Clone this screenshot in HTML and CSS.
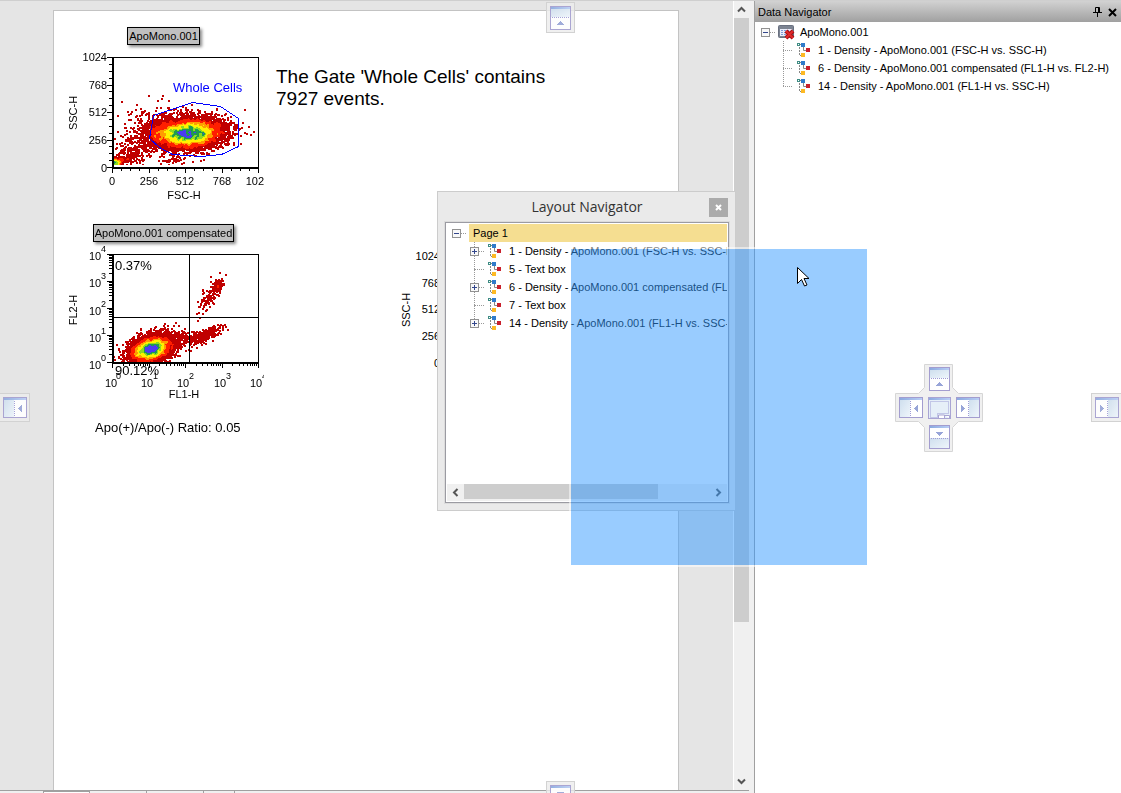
FILE: index.html
```
<!DOCTYPE html>
<html lang="en">
<head>
    <meta charset="UTF-8">
    <meta name="viewport" content="width=device-width, initial-scale=1.0">
    <title>Layout</title>
    <link rel="stylesheet" href="styles.css">
</head>
<body>
    <svg class="symbols" aria-hidden="true">
        <defs>
            <linearGradient id="bar" x1="0" x2="1" y1="0" y2="0">
                <stop offset="0" stop-color="#8ba9e0" />
                <stop offset="1" stop-color="#b9cef5" />
            </linearGradient>
            <linearGradient id="pane" x1="0" x2="1" y1="0" y2="1">
                <stop offset="0" stop-color="#cfdfee" />
                <stop offset="1" stop-color="#eef5fb" />
            </linearGradient>
        </defs>
        <symbol id="node" viewBox="0 0 14 14">
            <path d="M2.5 4v9M3 12.5h2" stroke="#888" stroke-dasharray="2 1" fill="none" />
            <path d="M3 1.5h2M6.5 4v3.500h3" stroke="#888" fill="none" />
            <rect x="0.500" y="0.500" width="2" height="2" fill="#fff" stroke="#3f8c84" />
            <rect x="4" y="0" width="4" height="4" fill="#2f7bcb" />
            <rect x="9" y="5" width="4" height="4" fill="#c9202c" />
            <rect x="4" y="10" width="4" height="4" fill="#fdb924" />
        </symbol>
        <symbol id="minus" viewBox="0 0 9 9">
            <rect x="0.500" y="0.500" width="8" height="8" fill="#f8f8f8" stroke="#919191" />
            <path d="M2 4.500h5" stroke="#33478c" />
        </symbol>
        <symbol id="plus" viewBox="0 0 9 9">
            <rect x="0.500" y="0.500" width="8" height="8" fill="#f8f8f8" stroke="#919191" />
            <path d="M2 4.500h5M4.500 2v5" stroke="#33478c" />
        </symbol>
        <symbol id="dock-up" viewBox="0 0 21 24">
            <rect x="0.500" y="0.500" width="20" height="23" fill="#fff" stroke="#a39dcf" />
            <rect x="1" y="3" width="19" height="8" fill="url(#pane)" />
            <rect x="1" y="1" width="19" height="2" fill="url(#bar)" />
            <path d="M2 11.500h17" stroke="#9f9cd6" stroke-dasharray="1 1" />
            <path d="M7 19h7v-1h-1v-1h-1v-1h-1v-1h-1v1h-1v1h-1v1h-1z" fill="#98a5d8" />
        </symbol>
        <symbol id="dock-down" viewBox="0 0 21 24">
            <rect x="0.500" y="0.500" width="20" height="23" fill="#fff" stroke="#a39dcf" />
            <rect x="1" y="13" width="19" height="10" fill="url(#pane)" />
            <rect x="1" y="1" width="19" height="2" fill="url(#bar)" />
            <path d="M2 13.500h17" stroke="#9f9cd6" stroke-dasharray="1 1" />
            <path d="M7 7h7v1h-1v1h-1v1h-1v1h-1v-1h-1v-1h-1v-1h-1z" fill="#98a5d8" />
        </symbol>
        <symbol id="dock-left" viewBox="0 0 24 21">
            <rect x="0.500" y="0.500" width="23" height="20" fill="#fff" stroke="#a39dcf" />
            <rect x="1" y="3" width="10" height="17" fill="url(#pane)" />
            <rect x="1" y="1" width="22" height="2" fill="url(#bar)" />
            <path d="M11.500 4v16" stroke="#9f9cd6" stroke-dasharray="1 1" />
            <path d="M19 8v7h-1v-1h-1v-1h-1v-1h-1v-1h1v-1h1v-1h1v-1z" fill="#98a5d8" />
        </symbol>
        <symbol id="dock-right" viewBox="0 0 24 21">
            <rect x="0.500" y="0.500" width="23" height="20" fill="#fff" stroke="#a39dcf" />
            <rect x="13" y="3" width="10" height="17" fill="url(#pane)" />
            <rect x="1" y="1" width="22" height="2" fill="url(#bar)" />
            <path d="M12.500 4v16" stroke="#9f9cd6" stroke-dasharray="1 1" />
            <path d="M5 8v7h1v-1h1v-1h1v-1h1v-1h-1v-1h-1v-1h-1v-1z" fill="#98a5d8" />
        </symbol>
        <symbol id="dock-fill" viewBox="0 0 23 22">
            <rect x="0.500" y="0.500" width="22" height="21" fill="#e6eff8" stroke="#a9a4d3" />
            <rect x="1" y="1" width="21" height="2" fill="url(#bar)" />
            <path d="M2.500 4.500h18v12h-11v4h-7z" fill="none" stroke="#9f9cd6" stroke-dasharray="1 1" />
            <path d="M10.500 21v-3h6v3M16.500 18.500h5v2.500" fill="#fff" stroke="#a9a4d3" />
        </symbol>
    </svg>

    <div class="app">
        <main class="workspace">
            <div class="view">
                <div class="page">
                    <figure class="plot plot-1">
                        <figcaption class="plot-title">ApoMono.001</figcaption>
                        <div class="chart">
                            <canvas class="density" data-plot="cells" width="145" height="110"></canvas>
                            <svg class="axes" data-scale="linear" viewBox="63 45 201 160" width="201" height="160">
                                <path class="ticks" />
                                <path class="frame" d="M112.500 57.500h146v110h-146z" />
                                <path class="axis" d="M113 57v111h146" />
                                <path class="gate" d="M192.500 102.500l28 4 18 12v28l-17 8-20 2-29-2-13-7-10-9 4-23z" />
                                <text class="gate-name" x="173" y="92">Whole Cells</text>
                                <g class="end">
                                    <text x="107" y="61">1024</text>
                                    <text x="107" y="89">768</text>
                                    <text x="107" y="116">512</text>
                                    <text x="107" y="144">256</text>
                                    <text x="107" y="172">0</text>
                                </g>
                                <g class="middle">
                                    <text x="112" y="185">0</text>
                                    <text x="149" y="185">256</text>
                                    <text x="185" y="185">512</text>
                                    <text x="222" y="185">768</text>
                                    <text x="258" y="185">1024</text>
                                    <text x="184" y="199">FSC-H</text>
                                    <text transform="translate(77 113) rotate(-90)">SSC-H</text>
                                </g>
                            </svg>
                        </div>
                    </figure>

                    <figure class="plot plot-2">
                        <figcaption class="plot-title">ApoMono.001 compensated</figcaption>
                        <div class="chart">
                            <canvas class="density" data-plot="compensated" width="145" height="110"></canvas>
                            <svg class="axes" data-scale="log" viewBox="63 242 201 165" width="201" height="165">
                                <path class="ticks" />
                                <path class="frame" d="M112.500 254.500h146v108h-146zM189.500 254v109M112 317.500h147" />
                                <path class="axis" d="M113 254v109h146" />
                                <text class="percent" x="115" y="270">0.37%</text>
                                <text class="percent" x="115" y="375">90.12%</text>
                                <g>
                                    <text x="89" y="260">10</text><text class="power" x="101" y="252">4</text>
                                    <text x="89" y="287">10</text><text class="power" x="101" y="279">3</text>
                                    <text x="89" y="315">10</text><text class="power" x="101" y="307">2</text>
                                    <text x="89" y="342">10</text><text class="power" x="101" y="334">1</text>
                                    <text x="89" y="369">10</text><text class="power" x="101" y="361">0</text>
                                    <text x="105" y="387">10</text><text class="power" x="116" y="379">0</text>
                                    <text x="141" y="387">10</text><text class="power" x="153" y="379">1</text>
                                    <text x="177" y="387">10</text><text class="power" x="189" y="379">2</text>
                                    <text x="214" y="387">10</text><text class="power" x="226" y="379">3</text>
                                    <text x="250" y="387">10</text><text class="power" x="262" y="379">4</text>
                                </g>
                                <g class="middle">
                                    <text x="184" y="398">FL1-H</text>
                                    <text transform="translate(77 310) rotate(-90)">FL2-H</text>
                                </g>
                            </svg>
                        </div>
                    </figure>

                    <figure class="plot plot-3">
                        <svg class="axes" viewBox="396 244 201 165" width="201" height="165">
                            <path class="frame" d="M445.500 256.500h146v107h-146z" />
                            <g class="end">
                                <text x="440" y="260">1024</text>
                                <text x="440" y="287">768</text>
                                <text x="440" y="313">512</text>
                                <text x="440" y="340">256</text>
                                <text x="440" y="367">0</text>
                            </g>
                            <text class="middle" transform="translate(410 310) rotate(-90)">SSC-H</text>
                        </svg>
                    </figure>

                    <p class="text-box gate-text">The Gate 'Whole Cells' contains<br>7927 events.</p>
                    <p class="text-box ratio-text">Apo(+)/Apo(-) Ratio: 0.05</p>
                </div>
            </div>
            <div class="scroll scroll-y">
                <button class="scroll-btn" aria-label="Scroll up"><svg width="9" height="7" viewBox="0 0 9 7"><path d="M1 5.500l3.500-3.500 3.500 3.500" /></svg></button>
                <div class="track"><div class="thumb"></div></div>
                <button class="scroll-btn" aria-label="Scroll down"><svg width="9" height="7" viewBox="0 0 9 7"><path d="M1 1.500l3.500 3.500 3.500-3.500" /></svg></button>
            </div>
            <div class="tabs">
                <div class="tab tab-active"></div>
                <div class="tab"></div>
                <div class="tab"></div>
                <div class="tab tab-new"></div>
            </div>
        </main>

        <aside class="data-navigator">
            <header class="panel-header">
                <h2 class="panel-title">Data Navigator</h2>
                <button class="panel-btn" aria-label="Auto hide"><svg width="9" height="10" viewBox="0 0 9 10"><path d="M2.500 5.500v-5h4v5M5.500 1v4M0 5.500h9M4.500 6v4" fill="none" stroke="#000" /></svg></button>
                <button class="panel-btn" aria-label="Close"><svg width="9" height="9" viewBox="0 0 9 9"><path d="M1 1l7 7M8 1l-7 7" fill="none" stroke="#000" stroke-width="2" /></svg></button>
            </header>
            <ul class="tree">
                <li>
                    <div class="row">
                        <button class="toggle" aria-label="Collapse"><svg width="9" height="9"><use href="#minus" /></svg></button>
                        <span class="stub"></span>
                        <svg class="file-icon" width="17" height="16" viewBox="0 0 17 16">
                            <rect x="0.500" y="1.500" width="15" height="12" rx="1" fill="#7c8492" stroke="#697080" />
                            <rect x="2" y="5" width="12" height="7" fill="#e9eefb" />
                            <path d="M3 6.500h9M3 8.500h9M3 10.500h9" stroke="#7f9bd8" stroke-dasharray="2 1" />
                            <path d="M8 7l7 7M15 7l-7 7" stroke="#a80d12" stroke-width="4" />
                            <path d="M8 7l7 7M15 7l-7 7" stroke="#e0292a" stroke-width="2" />
                        </svg>
                        <span>ApoMono.001</span>
                    </div>
                    <ul class="branch">
                        <li class="row"><span class="stub"></span><svg class="node" width="14" height="14"><use href="#node" /></svg>1 - Density - ApoMono.001 (FSC-H vs. SSC-H)</li>
                        <li class="row"><span class="stub"></span><svg class="node" width="14" height="14"><use href="#node" /></svg>6 - Density - ApoMono.001 compensated (FL1-H vs. FL2-H)</li>
                        <li class="row"><span class="stub"></span><svg class="node" width="14" height="14"><use href="#node" /></svg>14 - Density - ApoMono.001 (FL1-H vs. SSC-H)</li>
                    </ul>
                </li>
            </ul>
        </aside>

        <section class="window">
            <header class="window-header">
                <h2 class="window-title">Layout Navigator</h2>
                <button class="window-close" aria-label="Close"><svg width="7" height="7" viewBox="0 0 7 7"><path d="M1 1l5 5M6 1l-5 5" stroke="#fff" stroke-width="2" /></svg></button>
            </header>
            <div class="window-body">
                <ul class="tree layout-tree">
                    <li>
                        <div class="row">
                            <button class="toggle" aria-label="Collapse"><svg width="9" height="9"><use href="#minus" /></svg></button>
                            <span class="stub"></span>
                            <span class="selected">Page 1</span>
                        </div>
                        <ul class="branch">
                            <li class="row"><button class="toggle" aria-label="Expand"><svg width="9" height="9"><use href="#plus" /></svg></button><span class="stub"></span><svg class="node" width="14" height="14"><use href="#node" /></svg>1 - Density - ApoMono.001 (FSC-H vs. SSC-H)</li>
                            <li class="row"><span class="stub"></span><svg class="node" width="14" height="14"><use href="#node" /></svg>5 - Text box</li>
                            <li class="row"><button class="toggle" aria-label="Expand"><svg width="9" height="9"><use href="#plus" /></svg></button><span class="stub"></span><svg class="node" width="14" height="14"><use href="#node" /></svg>6 - Density - ApoMono.001 compensated (FL1-H vs. FL2-H)</li>
                            <li class="row"><span class="stub"></span><svg class="node" width="14" height="14"><use href="#node" /></svg>7 - Text box</li>
                            <li class="row"><button class="toggle" aria-label="Expand"><svg width="9" height="9"><use href="#plus" /></svg></button><span class="stub"></span><svg class="node" width="14" height="14"><use href="#node" /></svg>14 - Density - ApoMono.001 (FL1-H vs. SSC-H)</li>
                        </ul>
                    </li>
                </ul>
                <div class="scroll scroll-x">
                    <button class="scroll-btn" aria-label="Scroll left"><svg width="7" height="9" viewBox="0 0 7 9"><path d="M5.500 1l-3.500 3.500 3.500 3.500" /></svg></button>
                    <div class="track"><div class="thumb"></div></div>
                    <button class="scroll-btn" aria-label="Scroll right"><svg width="7" height="9" viewBox="0 0 7 9"><path d="M1.500 1l3.500 3.500-3.500 3.500" /></svg></button>
                </div>
            </div>
        </section>

        <div class="drop-preview"></div>

        <button class="dock dock-top" aria-label="Dock top"><svg width="21" height="24"><use href="#dock-up" /></svg></button>
        <button class="dock dock-bottom" aria-label="Dock bottom"><svg width="21" height="24"><use href="#dock-down" /></svg></button>
        <button class="dock dock-start" aria-label="Dock left"><svg width="24" height="21"><use href="#dock-left" /></svg></button>
        <button class="dock dock-end" aria-label="Dock right"><svg width="24" height="21"><use href="#dock-right" /></svg></button>

        <div class="dock-cross">
            <svg class="cross-shape" width="88" height="88" viewBox="0 0 88 88">
                <path d="M29.500 0.500h28v23l6 6h24v28h-24l-6 6v24h-28v-24l-6-6h-23v-28h23l6-6z" fill="#f0f0f0" stroke="#d6d6d6" />
            </svg>
            <button class="cross-btn cross-up" aria-label="Dock above"><svg width="21" height="24"><use href="#dock-up" /></svg></button>
            <button class="cross-btn cross-left" aria-label="Dock to the left"><svg width="24" height="21"><use href="#dock-left" /></svg></button>
            <button class="cross-btn cross-fill" aria-label="Dock as tab"><svg width="23" height="22"><use href="#dock-fill" /></svg></button>
            <button class="cross-btn cross-right" aria-label="Dock to the right"><svg width="24" height="21"><use href="#dock-right" /></svg></button>
            <button class="cross-btn cross-down" aria-label="Dock below"><svg width="21" height="24"><use href="#dock-down" /></svg></button>
        </div>

        <svg class="cursor" width="12" height="20" viewBox="0 0 12 20" aria-hidden="true">
            <path d="M0.500 0.500v16l4-4 3 6.500 2.500-1-3-6.500h5z" fill="#fff" stroke="#000" />
        </svg>
    </div>
    <script src="script.js"></script>
</body>
</html>
```
FILE: styles.css
```
* {
    box-sizing: border-box;
}

html,
body {
    height: 100%;
    margin: 0;
    font-family: 'Liberation Sans', Arial, sans-serif;
    font-size: 11px;
    color: #000;
    background-color: #fff;
}

button {
    display: flex;
    align-items: center;
    justify-content: center;
    margin: 0;
    padding: 0;
    border: 0;
    background: none;
}

h2,
p,
ul,
figure {
    margin: 0;
    padding: 0;
    font-weight: normal;
}

svg {
    display: block;
    flex: none;
}

.symbols {
    position: absolute;
    width: 0;
    height: 0;
}

.app {
    position: relative;
    display: flex;
    height: 100vh;
    overflow: hidden;
    border-top: 1px solid #cfcfcf;
}

/* workspace */
.workspace {
    flex: 1;
    display: grid;
    grid-template-columns: 1fr 20px;
    grid-template-rows: 1fr 3px;
    background-color: #f0f0f0;
}

.view {
    min-height: 0;
    padding: 9px 54px 0 53px;
    background-color: #e5e5e5;
    border-right: 1px solid #fff;
    overflow: hidden;
}

.page {
    position: relative;
    height: 1100px;
    background-color: #fff;
    border: 1px solid #c3c3c3;
}

.tabs {
    grid-column: 1 / -1;
    display: flex;
    margin-right: 5px;
    padding-left: 43px;
    border-top: 1px solid #a0a0a0;
}

.tab {
    width: 57px;
    border-right: 1px solid #a0a0a0;
}

.tab-active {
    width: 47px;
    background-color: #fff;
    border: 1px solid #a0a0a0;
    border-bottom: 0;
}

.tab-new {
    width: 31px;
}

/* scroll bars */
.scroll {
    display: flex;
    background-color: #f0f0f0;
}

.scroll .track {
    flex: 1;
}

.scroll .thumb {
    background-color: #cdcdcd;
}

.scroll-btn path {
    fill: none;
    stroke: #555;
    stroke-width: 2;
}

.scroll-y {
    flex-direction: column;
    padding-right: 5px;
}

.scroll-y .scroll-btn {
    height: 17px;
}

.scroll-y .thumb {
    height: 80%;
}

.scroll-x {
    height: 17px;
}

.scroll-x .scroll-btn {
    width: 17px;
}

.scroll-x .thumb {
    width: 79%;
    height: 15px;
}

/* objects on the layout page */
.plot {
    position: absolute;
    display: flex;
    flex-direction: column;
    align-items: center;
}

.plot-1 {
    left: 9px;
    top: 16px;
}

.plot-2 {
    left: 9px;
    top: 213px;
}

.plot-3 {
    left: 342px;
    top: 233px;
}

.plot-title {
    height: 18px;
    padding: 0 1px;
    line-height: 16px;
    white-space: nowrap;
    background-color: #c0c0c0;
    border: 1px solid #000;
    box-shadow: 2px 2px 3px #888;
}

.chart {
    position: relative;
}

.density {
    position: absolute;
    left: 50px;
    top: 12px;
}

.axes {
    position: relative;
    font-size: 11px;
}

.axes .frame,
.axes .axis,
.axes .ticks {
    fill: none;
    stroke: #000;
    shape-rendering: crispEdges;
}

.axes .axis {
    stroke-width: 2;
}

.axes .end {
    text-anchor: end;
}

.axes .middle {
    text-anchor: middle;
}

.axes .power {
    font-size: 9px;
}

.axes .percent {
    font-size: 13px;
}

.axes .gate {
    fill: none;
    stroke: #00f;
    shape-rendering: crispEdges;
}

.axes .gate-name {
    font-size: 13px;
    fill: #00f;
}

.text-box {
    position: absolute;
    white-space: nowrap;
}

.gate-text {
    left: 222px;
    top: 55px;
    font-size: 19px;
    line-height: 22px;
}

.ratio-text {
    left: 41px;
    top: 409px;
    font-size: 13px;
    line-height: 16px;
}

/* data navigator */
.data-navigator {
    width: 367px;
    background-color: #fff;
    border-left: 1px solid #a0a0a0;
}

.panel-header {
    display: flex;
    align-items: center;
    gap: 6px;
    height: 21px;
    padding: 1px 4px 0 3px;
    background: linear-gradient(#d2d2d2, #a0a0a0);
}

.panel-title {
    flex: 1;
    font-size: 11px;
}

.tree,
.branch {
    list-style: none;
}

.data-navigator .tree {
    padding: 1px 0 0 6px;
}

.row {
    display: flex;
    align-items: center;
    height: 18px;
    white-space: nowrap;
}

.toggle {
    flex: none;
    width: 9px;
    height: 9px;
}

.stub {
    flex: none;
    width: 5px;
    margin-right: 3px;
    border-top: 1px dotted #999;
}

.file-icon {
    margin-right: 5px;
}

.node {
    margin: 0 7px 0 3px;
}

.data-navigator .branch {
    margin-left: 22px;
    background: repeating-linear-gradient(#999 0 1px, transparent 1px 2px) 0 0 / 1px 46px no-repeat;
}

.data-navigator .branch .stub {
    width: 9px;
    margin-right: 2px;
}

/* floating layout navigator */
.window {
    position: absolute;
    left: 437px;
    top: 190px;
    display: flex;
    flex-direction: column;
    width: 299px;
    height: 320px;
    padding: 0 6px 7px 7px;
    background-color: #eaeaea;
    border: 1px solid #ccc;
}

.window-header {
    display: flex;
    align-items: center;
    height: 30px;
}

.window-title {
    flex: 1;
    padding: 0 0 2px 20px;
    font-family: 'Open Sans', sans-serif;
    font-size: 14px;
    text-align: center;
    color: #333;
}

.window-close {
    width: 19px;
    height: 19px;
    margin-right: 1px;
    background-color: #ababab;
}

.window-body {
    flex: 1;
    display: flex;
    flex-direction: column;
    min-height: 0;
    padding: 1px;
    background-color: #fff;
    border: 1px solid #9b9ba2;
    box-shadow: 0 0 0 1px #dcdcdc;
}

.layout-tree {
    flex: 1;
    padding-left: 5px;
    overflow: hidden;
}

.layout-tree .selected {
    flex: 1;
    padding-left: 4px;
    line-height: 18px;
    background-color: #f5de91;
}

.layout-tree .branch {
    margin-left: 18px;
    background: repeating-linear-gradient(#999 0 1px, transparent 1px 2px) 4px 0 / 1px 82px no-repeat;
}

.layout-tree .branch .stub {
    margin-right: 1px;
}

.layout-tree .branch .stub:first-child {
    width: 10px;
    margin-left: 4px;
}

.layout-tree .node {
    margin-left: 3px;
}

.drop-preview {
    position: absolute;
    left: 571px;
    top: 248px;
    width: 296px;
    height: 316px;
    background-color: rgba(51, 153, 255, 0.5);
    box-shadow: 0 0 0 2px rgba(255, 255, 255, 0.5);
}

/* docking guides */
.dock {
    position: absolute;
    width: 29px;
    height: 31px;
    background-color: rgba(236, 236, 236, 0.8);
    border: 1px solid #d2d2d2;
}

.dock svg {
    opacity: 0.9;
}

.dock-top {
    left: 546px;
    top: 1px;
}

.dock-bottom {
    left: 546px;
    bottom: -19px;
}

.dock-start,
.dock-end {
    top: 392px;
    width: 31px;
    height: 29px;
}

.dock-start {
    left: -1px;
}

.dock-end {
    right: -1px;
}

.dock-cross {
    position: absolute;
    left: 895px;
    top: 363px;
    display: grid;
    grid-template-columns: 31px 26px 31px;
    grid-template-rows: 30px 27px 31px;
    grid-template-areas:
        ". up ."
        "left fill right"
        ". down .";
}

.cross-shape {
    position: absolute;
    inset: 0;
}

.cross-btn {
    position: relative;
}

.cross-up {
    grid-area: up;
}

.cross-left {
    grid-area: left;
}

.cross-fill {
    grid-area: fill;
}

.cross-right {
    grid-area: right;
}

.cross-down {
    grid-area: down;
}

.cursor {
    position: absolute;
    left: 797px;
    top: 266px;
}
```
FILE: script.js
```
// small seeded generator so the plots are the same on every load
let seed = 7927
function random() {
    seed = (seed * 1664525 + 1013904223) % 4294967296
    return seed / 4294967296
}

function normal() {
    return Math.sqrt(-2 * Math.log(random() + 1e-9)) * Math.cos(2 * Math.PI * random())
}

// x, y: centre, sx, sy: spread, slope: tilt of the cloud
const plots = {
    cells: [
        { n: 6000, x: 75, y: 76, sx: 17, sy: 7, slope: -0.03 },
        { n: 1300, x: 72, y: 76, sx: 20, sy: 9, slope: -0.05 },
        { n: 400, x: 32, y: 85, sx: 16, sy: 9, slope: -0.5 },
        { n: 220, x: 10, y: 102, sx: 9, sy: 3, slope: -0.3 },
        { n: 260, x: 2, y: 105, sx: 3, sy: 2, slope: 0 },
        { n: 90, x: 42, y: 60, sx: 19, sy: 8, slope: 0 },
        { n: 45, x: 58, y: 103, sx: 7, sy: 2, slope: 0 }
    ],
    compensated: [
        { n: 6200, x: 37, y: 95, sx: 10, sy: 6, slope: -0.2 },
        { n: 900, x: 44, y: 91, sx: 12, sy: 7, slope: -0.2 },
        { n: 110, x: 70, y: 84, sx: 7, sy: 3, slope: 0.1 },
        { n: 260, x: 92, y: 81, sx: 8, sy: 3, slope: -0.4 },
        { n: 110, x: 96, y: 43, sx: 6, sy: 6, slope: -1 },
        { n: 130, x: 104, y: 32, sx: 2, sy: 3, slope: -0.5 }
    ]
}

// share of the peak density at which each colour begins
const levels = [
    [0.9, '#4a3cf0'],
    [0.74, '#1f9a50'],
    [0.62, '#8edb1e'],
    [0.42, '#fff000'],
    [0.3, '#ff9c00'],
    [0.15, '#ff1e00'],
    [0, '#c00000']
]

function blur(counts, w, h, r) {
    const out = new Float32Array(w * h)
    for (let y = 0; y < h; y++) {
        for (let x = 0; x < w; x++) {
            let sum = 0
            let n = 0
            for (let j = Math.max(0, y - r); j <= Math.min(h - 3, y + r); j++) {
                for (let i = Math.max(0, x - r); i <= Math.min(w - 1, x + r); i++) {
                    sum += counts[j * w + i]
                    n++
                }
            }
            out[y * w + x] = n ? sum / n : 0
        }
    }
    return out
}

document.querySelectorAll('.density').forEach(canvas => {
    const ctx = canvas.getContext('2d')
    const w = canvas.width
    const h = canvas.height
    const counts = new Float32Array(w * h)

    plots[canvas.dataset.plot].forEach(c => {
        for (let i = 0; i < c.n; i++) {
            const dx = normal() * c.sx
            const x = Math.floor(c.x + dx)
            const y = Math.floor(c.y + dx * c.slope + normal() * c.sy)
            for (let k = 0; k < 4; k++) {
                const px = x + k % 2
                const py = y + (k >> 1)
                if (px >= 0 && px < w && py >= 0 && py < h - 2) counts[py * w + px] += 0.25
            }
        }
    })

    const smooth = blur(counts, w, h, 1)
    const peak = Array.from(smooth).sort((a, b) => b - a)[30]
    counts.forEach((count, i) => {
        if (!count) return
        const level = levels.find(l => smooth[i] >= l[0] * peak)
        ctx.fillStyle = level[1]
        ctx.fillRect(i % w, Math.floor(i / w), 1, 1)
    })
})

document.querySelectorAll('.axes[data-scale]').forEach(svg => {
    const box = svg.viewBox.baseVal
    const left = box.x + 49
    const top = box.y + 12
    const log = svg.dataset.scale === 'log'
    const height = log ? 109 : 111
    let d = ''
    const tick = (t, size) => {
        const x = Math.round(left + t * 146) + 0.5
        const y = Math.round(top + (1 - t) * (height - 1)) + 0.5
        d += `M${x} ${top + height}v${size}M${left} ${y}h${-size}`
    }
    for (let i = 0; i <= 4; i++) {
        tick(i / 4, 5)
        if (i === 4) break
        if (log) {
            for (let m = 2; m < 10; m++) tick((i + Math.log10(m)) / 4, 3)
        } else {
            for (let m = 1; m < 4; m++) tick((i + m / 4) / 4, 3)
        }
    }
    svg.querySelector('.ticks').setAttribute('d', d)
})
```
